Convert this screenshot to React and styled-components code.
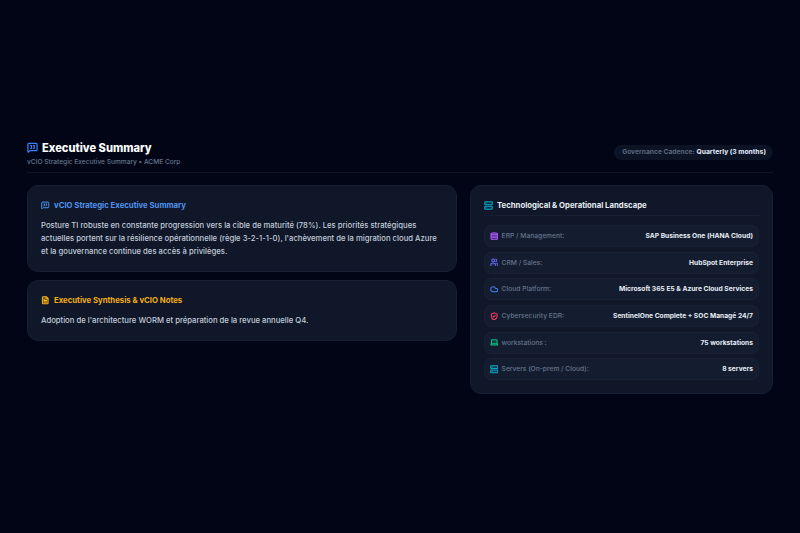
import React from 'react';
import styled, { createGlobalStyle } from 'styled-components';
import { MessageSquareQuote, FileText, Server, Database, Users, Cloud, ShieldCheck, Laptop } from 'lucide-react';

const GlobalStyle = createGlobalStyle`
  * { box-sizing: border-box; }
  html, body { margin: 0; padding: 0; }
  body {
    background: #020515;
    font-family: Inter, "Liberation Sans", sans-serif;
  }
`;

const Page = styled.main`
  width: 800px;
  height: 533px;
  padding: 0 27px;
  display: flex;
  flex-direction: column;
  justify-content: center;
  background: #020515;
`;

const Header = styled.header`
  display: flex;
  justify-content: space-between;
  align-items: center;
  padding-bottom: 5px;
  margin-bottom: 12.5px;
  border-bottom: 1px solid #0f1626;
`;

const Title = styled.h1`
  display: flex;
  align-items: center;
  gap: 4px;
  margin: 0;
  font-size: 11.1px;
  line-height: 18px;
  font-weight: 800;
  color: #fff;
  svg { color: #3b82f6; }
`;

const Subtitle = styled.p`
  margin: 0;
  font-size: 6.6px;
  line-height: 10px;
  font-weight: 500;
  color: #64748b;
`;

const Cadence = styled.div`
  padding: 3px 7px 3px 8px;
  border-radius: 999px;
  background: #0c1324;
  font-size: 6.7px;
  line-height: 9px;
  font-weight: 700;
  color: #5b6880;
  b { color: #d5dde8; font-weight: 800; }
`;

const Columns = styled.div`
  display: grid;
  grid-template-columns: 430px 303px;
  gap: 13px;
  align-items: start;
`;

const Stack = styled.div`
  display: flex;
  flex-direction: column;
  gap: 8.6px;
`;

const Card = styled.section`
  padding: 13px;
  border-radius: 11px;
  background: #0f1729;
  border: 1px solid #162032;
`;

const CardTitle = styled.h2`
  display: flex;
  align-items: center;
  gap: ${props => props.gap || 4.5}px;
  margin: 0 0 7.6px;
  font-size: 7.75px;
  line-height: 12px;
  font-weight: 700;
  color: ${props => props.color};
`;

const Body = styled.p`
  margin: 0;
  font-size: 7.7px;
  line-height: 13px;
  font-weight: 500;
  color: #c3ccd9;
`;

const LandscapeTitle = styled(CardTitle)`
  padding-bottom: 4px;
  margin-bottom: 8.8px;
  border-bottom: 1px solid #162032;
`;

const Rows = styled.div`
  display: flex;
  flex-direction: column;
  gap: 4.7px;
`;

const Row = styled.div`
  display: flex;
  justify-content: space-between;
  align-items: center;
  height: 22px;
  padding: 0 5px 0 4.6px;
  border-radius: 7px;
  background: #141d30;
  border: 1px solid #192235;
`;

const RowLabel = styled.span`
  display: flex;
  align-items: center;
  gap: 3.5px;
  font-size: 6.7px;
  font-weight: 500;
  color: #64748b;
  svg { color: ${props => props.color}; }
`;

const RowValue = styled.span`
  font-size: 6.7px;
  font-weight: 700;
  color: #e8edf4;
`;

const landscape = [
  { label: 'ERP / Management:', value: 'SAP Business One (HANA Cloud)', Icon: Database, color: '#a855f7', fill: 0.4 },
  { label: 'CRM / Sales:', value: 'HubSpot Enterprise', Icon: Users, color: '#6366f1', fill: 0.2 },
  { label: 'Cloud Platform:', value: 'Microsoft 365 E5 & Azure Cloud Services', Icon: Cloud, color: '#3b82f6', fill: 0 },
  { label: 'Cybersecurity EDR:', value: 'SentinelOne Complete + SOC Managé 24/7', Icon: ShieldCheck, color: '#f43f5e', fill: 0 },
  { label: 'workstations :', value: '75 workstations', Icon: Laptop, color: '#10b981', fill: 0.25 },
  { label: 'Servers (On-prem / Cloud):', value: '8 servers', Icon: Server, color: '#06a5c4', fill: 0.2 },
];

export default function App() {
  return (
    <Page>
      <GlobalStyle />
      <Header>
        <div>
          <Title><MessageSquareQuote size={11} strokeWidth={2.6} />Executive Summary</Title>
          <Subtitle>vCIO Strategic Executive Summary • ACME Corp</Subtitle>
        </div>
        <Cadence>Governance Cadence: <b>Quarterly (3 months)</b></Cadence>
      </Header>
      <Columns>
        <Stack>
          <Card>
            <CardTitle color="#4f94ee"><MessageSquareQuote size={8.5} strokeWidth={2.8} />vCIO Strategic Executive Summary</CardTitle>
            <Body>
              Posture TI robuste en constante progression vers la cible de maturité (78%). Les priorités stratégiques actuelles portent sur la résilience opérationnelle (règle 3-2-1-1-0), l'achèvement de la migration cloud Azure et la gouvernance continue des accès à privilèges.
            </Body>
          </Card>
          <Card>
            <CardTitle color="#f5ae12"><FileText size={8.5} strokeWidth={3} fill="#f5ae12" fillOpacity={0.3} />Executive Synthesis &amp; vCIO Notes</CardTitle>
            <Body>Adoption de l'architecture WORM et préparation de la revue annuelle Q4.</Body>
          </Card>
        </Stack>
        <Card>
          <LandscapeTitle color="#e8edf4" gap={4}><Server size={9} strokeWidth={3} color="#06a5c4" fill="#06a5c4" fillOpacity={0.2} />Technological &amp; Operational Landscape</LandscapeTitle>
          <Rows>
            {landscape.map(({ label, value, Icon, color, fill }) => (
              <Row key={label}>
                <RowLabel color={color}>
                  <Icon size={8.5} strokeWidth={3} fill={color} fillOpacity={fill} />
                  {label}
                </RowLabel>
                <RowValue>{value}</RowValue>
              </Row>
            ))}
          </Rows>
        </Card>
      </Columns>
    </Page>
  );
}
